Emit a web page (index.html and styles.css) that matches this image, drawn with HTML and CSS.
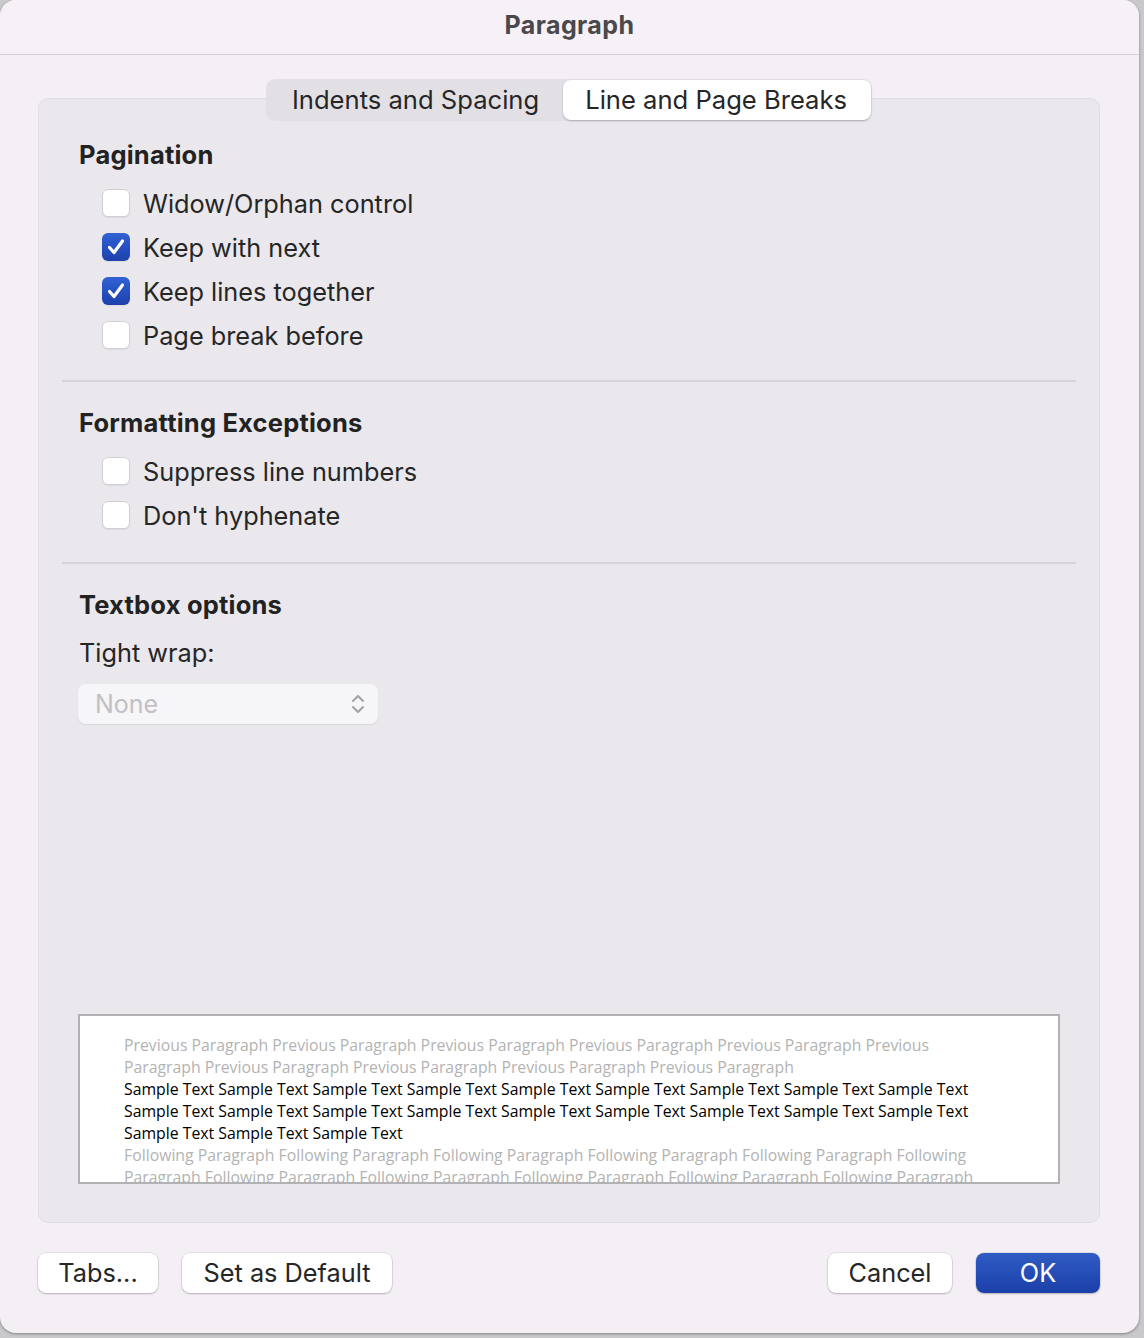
FILE: index.html
```html
<!DOCTYPE html>
<html lang="en">
<head>
    <meta charset="UTF-8">
    <title>Paragraph</title>
    <link rel="stylesheet" href="styles.css">
</head>
<body>
    <div class="window">
        <div class="titlebar">Paragraph</div>
        <div class="content">
            <div class="tabs">
                <span class="tab">Indents and Spacing</span>
                <span class="tab on">Line and Page Breaks</span>
            </div>
            <div class="panel">
                <h2 class="heading">Pagination</h2>
                <div class="row"><span class="box"></span>Widow/Orphan control</div>
                <div class="row"><span class="box checked"><svg viewBox="0 0 28 28"><path d="M7.5 14.5 L12 19.5 L20.5 8"/></svg></span>Keep with next</div>
                <div class="row"><span class="box checked"><svg viewBox="0 0 28 28"><path d="M7.5 14.5 L12 19.5 L20.5 8"/></svg></span>Keep lines together</div>
                <div class="row"><span class="box"></span>Page break before</div>
                <hr class="divider">
                <h2 class="heading">Formatting Exceptions</h2>
                <div class="row"><span class="box"></span>Suppress line numbers</div>
                <div class="row"><span class="box"></span>Don't hyphenate</div>
                <hr class="divider second">
                <h2 class="heading">Textbox options</h2>
                <div class="label">Tight wrap:</div>
                <div class="select">
                    <span>None</span>
                    <svg viewBox="0 0 16 24"><path d="M3 9 L8 4 L13 9 M3 15 L8 20 L13 15"/></svg>
                </div>
                <div class="preview">
                    <div class="gray">Previous Paragraph Previous Paragraph Previous Paragraph Previous Paragraph Previous Paragraph Previous</div>
                    <div class="gray">Paragraph Previous Paragraph Previous Paragraph Previous Paragraph Previous Paragraph</div>
                    <div>Sample Text Sample Text Sample Text Sample Text Sample Text Sample Text Sample Text Sample Text Sample Text</div>
                    <div>Sample Text Sample Text Sample Text Sample Text Sample Text Sample Text Sample Text Sample Text Sample Text</div>
                    <div>Sample Text Sample Text Sample Text</div>
                    <div class="gray">Following Paragraph Following Paragraph Following Paragraph Following Paragraph Following Paragraph Following</div>
                    <div class="gray">Paragraph Following Paragraph Following Paragraph Following Paragraph Following Paragraph Following Paragraph</div>
                </div>
            </div>
            <div class="buttons">
                <a href="#" class="btn tabs-btn">Tabs...</a>
                <a href="#" class="btn default-btn">Set as Default</a>
                <span class="spacer"></span>
                <a href="#" class="btn cancel">Cancel</a>
                <a href="#" class="btn ok">OK</a>
            </div>
        </div>
    </div>
</body>
</html>
```

FILE: styles.css
```css
*{
    margin: 0;
    padding: 0;
    box-sizing: border-box;
}
body{
    background: #c9c8ca;
    font-family: Inter, "Liberation Sans", sans-serif;
    color: #262626;
    width: 1144px;
    height: 1338px;
    overflow: hidden;
}
.window{
    width: 1139px;
    height: 1333px;
    background: #f3eff5;
    border-radius: 16px;
    box-shadow: 0 1px 3px rgba(0, 0, 0, .35);
    display: flex;
    flex-direction: column;
    overflow: hidden;
}
.titlebar{
    height: 55px;
    background: #f6f0f7;
    border-bottom: 1px solid #d6d1d7;
    font-size: 25px;
    font-weight: 700;
    letter-spacing: .4px;
    color: #4a484b;
    text-align: center;
    line-height: 50px;
}
.content{
    flex: 1;
    display: flex;
    flex-direction: column;
    padding: 24px 39px 39px 38px;
}
.tabs{
    align-self: center;
    display: flex;
    height: 42px;
    padding: 1px;
    margin-bottom: -23px;
    background: #e3e0e5;
    border-radius: 9px;
    position: relative;
    z-index: 1;
    font-size: 25.6px;
}
.tab{
    display: block;
    line-height: 39px;
    padding: 0 24px 0 25px;
    color: #262626;
}
.tab.on{
    background: #fff;
    border-radius: 8px;
    box-shadow: 0 1px 2px rgba(0, 0, 0, .25);
    padding: 0 24px 0 22px;
}
.panel{
    height: 1125px;
    background: #eae8ec;
    border: 1px solid #e0dde3;
    border-radius: 10px;
    padding: 40px 23px 38px 23px;
    display: flex;
    flex-direction: column;
}
.heading{
    font-size: 25.5px;
    font-weight: 700;
    letter-spacing: .2px;
    line-height: 32px;
    color: #222;
    padding-left: 17px;
    margin-bottom: 10px;
}
.row{
    display: flex;
    align-items: center;
    height: 44px;
    padding-left: 40px;
    font-size: 25.3px;
}
.box{
    width: 28px;
    height: 28px;
    margin-right: 13px;
    background: #fff;
    border: 1px solid #d3d0d5;
    border-radius: 6px;
    box-shadow: 0 1px 1px rgba(0, 0, 0, .06);
}
.box.checked{
    border: none;
    background: linear-gradient(#3162d3, #1d40ad);
}
.box svg{
    display: block;
    width: 28px;
    height: 28px;
    fill: none;
    stroke: #fff;
    stroke-width: 3.2;
    stroke-linecap: round;
    stroke-linejoin: round;
}
.divider{
    border: none;
    height: 2px;
    background: #d6d4d8;
    margin: 23px 0 25px;
}
.divider.second{
    margin-top: 25px;
}
.label{
    font-size: 25.3px;
    line-height: 32px;
    padding-left: 17px;
    margin-top: 6px;
}
.select{
    width: 300px;
    height: 40px;
    margin: 15px 0 0 16px;
    background: #f6f5f7;
    border-radius: 8px;
    box-shadow: 0 1px 1px rgba(0, 0, 0, .08);
    display: flex;
    align-items: center;
    justify-content: space-between;
    padding: 0 12px 0 17px;
    font-size: 25px;
    color: #c2c0c4;
}
.select svg{
    width: 16px;
    height: 24px;
    fill: none;
    stroke: #a3a1a5;
    stroke-width: 2;
    stroke-linecap: round;
    stroke-linejoin: round;
}
.preview{
    margin: auto 16px 0 16px;
    height: 170px;
    background: #fff;
    border: 2px solid #b2b1b3;
    padding: 18px 0 0 44px;
    overflow: hidden;
    font-family: "Open Sans", sans-serif;
    font-size: 15.8px;
    line-height: 22px;
    color: #000;
    white-space: nowrap;
}
.preview .gray{
    color: #b3b3b3;
}
.buttons{
    display: flex;
    gap: 24px;
    margin-top: 30px;
}
.spacer{
    flex: 1;
}
.btn{
    display: block;
    height: 40px;
    line-height: 40px;
    background: #fff;
    border-radius: 8px;
    box-shadow: 0 0 0 .5px rgba(0, 0, 0, .12), 0 1px 2px rgba(0, 0, 0, .22);
    text-decoration: none;
    color: #262626;
    font-size: 25.3px;
    text-align: center;
}
.btn.tabs-btn{
    width: 120px;
}
.btn.default-btn{
    width: 210px;
}
.btn.cancel{
    width: 124px;
}
.btn.ok{
    width: 124px;
    color: #fff;
    background: linear-gradient(#2f5cc4, #1c3fa9);
}
```
